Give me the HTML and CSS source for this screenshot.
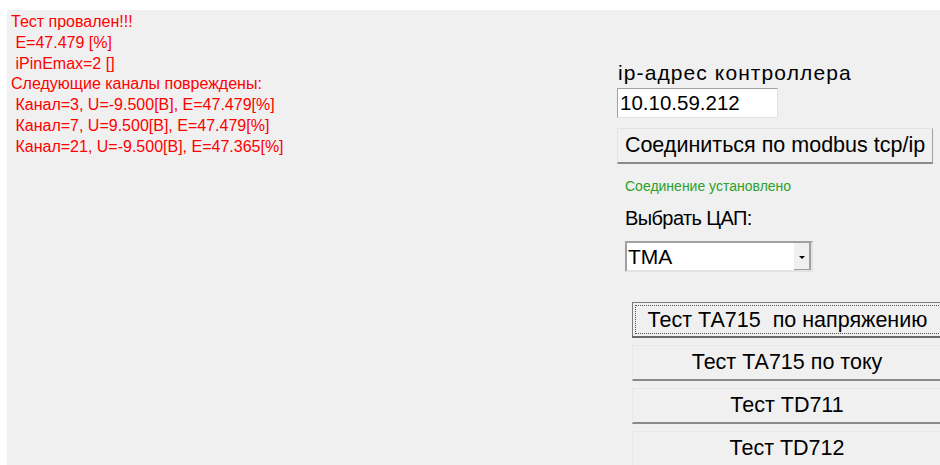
FILE: index.html
```html
<!DOCTYPE html>
<html lang="ru">
<head>
<meta charset="utf-8">
<title>Тест ЦАП</title>
<link rel="stylesheet" href="styles.css">
</head>
<body>
<div class="window">
  <div class="log">
    <div class="log-line">Тест провален!!!</div>
    <div class="log-line">&nbsp;E=47.479 [%]</div>
    <div class="log-line">&nbsp;iPinEmax=2 []</div>
    <div class="log-line">Следующие каналы повреждены:</div>
    <div class="log-line">&nbsp;Канал=3, U=-9.500[B], E=47.479[%]</div>
    <div class="log-line">&nbsp;Канал=7, U=9.500[B], E=47.479[%]</div>
    <div class="log-line">&nbsp;Канал=21, U=-9.500[B], E=47.365[%]</div>
  </div>
  <div class="controls">
    <div class="label ip-label">ip-адрес контроллера</div>
    <div class="ip-input">10.10.59.212</div>
    <div class="btn connect-btn">Соединиться по modbus tcp/ip</div>
    <div class="status">Соединение установлено</div>
    <div class="label dac-label">Выбрать ЦАП:</div>
    <div class="combo">
      <span class="combo-value">TMA</span>
      <span class="combo-arrow"><span class="arrow-glyph"></span></span>
    </div>
    <div class="tests">
      <div class="btn test-btn focused"><span class="focus-rect">Тест ТА715&nbsp; по напряжению</span></div>
      <div class="btn test-btn">Тест ТА715 по току</div>
      <div class="btn test-btn">Тест TD711</div>
      <div class="btn test-btn">Тест TD712</div>
    </div>
  </div>
</div>
</body>
</html>
```
FILE: styles.css
```css
html, body {
  margin: 0;
  padding: 0;
  background: #ffffff;
  overflow: hidden;
}

body {
  width: 940px;
  height: 465px;
  font-family: "Liberation Sans", Arial, sans-serif;
}

.window {
  margin: 10px 0 0 7px;
  height: 455px;
  background: #f0f0f0;
  display: flex;
  overflow: hidden;
}

.log {
  width: 610px;
  flex: none;
  padding: 2px 0 0 4px;
  box-sizing: border-box;
  color: #ff0000;
  font-size: 16px;
}

.log-line {
  height: 20.8px;
  line-height: 20px;
  white-space: pre;
}

.controls {
  flex: none;
  width: 330px;
  display: flex;
  flex-direction: column;
  align-items: flex-start;
  padding-top: 50px;
  color: #000;
}

.label {
  line-height: 26px;
  white-space: nowrap;
}

.ip-label {
  margin-left: 1px;
  font-size: 21px;
  letter-spacing: 1.1px;
}

.ip-input {
  margin-top: 2px;
  width: 161px;
  height: 30px;
  box-sizing: border-box;
  background: #fff;
  border: 1px solid #a0a0a0;
  border-right-color: #e3e3e3;
  border-bottom-color: #e3e3e3;
  font-size: 20.5px;
  line-height: 28px;
  padding-left: 2px;
}

.btn {
  background: #f0f0f0;
  border: 1px solid #ffffff;
  border-right-color: #a0a0a0;
  border-bottom: 2px solid #8a8a8a;
  box-sizing: border-box;
  font-size: 21.5px;
  text-align: center;
  white-space: nowrap;
}

.connect-btn {
  margin-top: 10px;
  width: 316px;
  height: 36px;
  line-height: 33px;
  border-color: #e3e3e3 #a0a0a0 #8a8a8a #e3e3e3;
}

.status {
  margin: 14px 0 0 8px;
  color: #2ca02c;
  font-size: 14px;
  line-height: 16px;
}

.dac-label {
  margin: 11px 0 0 8px;
  font-size: 20px;
  letter-spacing: -0.6px;
}

.combo {
  margin: 10px 0 0 8px;
  width: 188px;
  height: 31px;
  box-sizing: border-box;
  background: #fff;
  border: 2px solid #a0a0a0;
  border-right-color: #e3e3e3;
  border-bottom-color: #e3e3e3;
  display: flex;
}

.combo-value {
  flex: 1;
  font-size: 21px;
  line-height: 28px;
  padding-left: 1px;
}

.combo-arrow {
  width: 15px;
  background: #f0f0f0;
  border-right: 2px solid #a0a0a0;
  border-bottom: 1px solid #a0a0a0;
  display: flex;
  align-items: center;
  justify-content: center;
}

.arrow-glyph {
  width: 0;
  height: 0;
  border-left: 3px solid transparent;
  border-right: 3px solid transparent;
  border-top: 3px solid #000;
  margin-top: 2px;
}

.tests {
  margin: 30px 0 0 15px;
  display: flex;
  flex-direction: column;
  gap: 7px;
}

.test-btn {
  width: 310px;
  height: 36px;
  line-height: 33px;
  border-color: #e8e8e8 #a0a0a0 #8a8a8a #e8e8e8;
}

.test-btn.focused {
  border: 1px solid #7a7a7a;
  border-bottom: 2px solid #6a6a6a;
  padding: 2px;
  line-height: 28px;
}

.focus-rect {
  display: block;
  height: 100%;
  box-sizing: border-box;
  border: 1px dotted #505050;
  border-right: none;
}
```
